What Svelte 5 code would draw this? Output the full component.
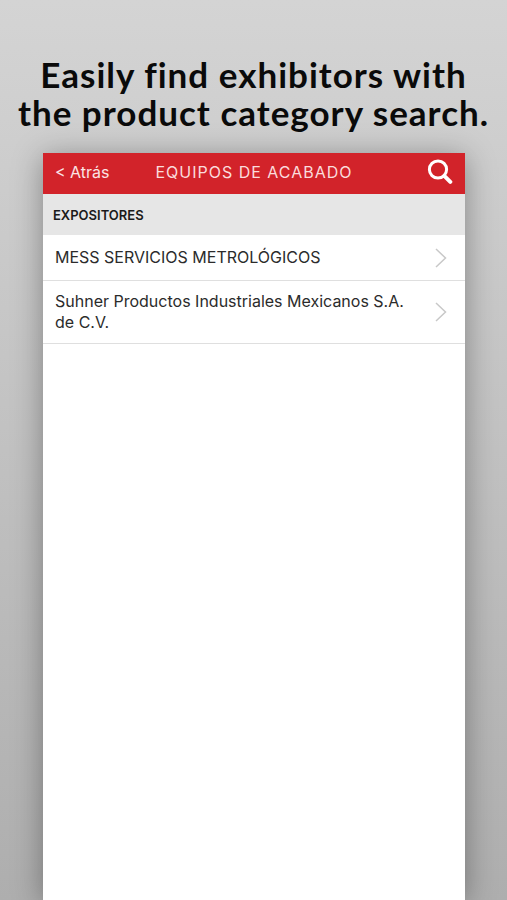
<script>
  const exhibitors = [
    { id: 1, name: "MESS SERVICIOS METROLÓGICOS" },
    { id: 2, name: "Suhner Productos Industriales Mexicanos S.A. de C.V." },
  ];
</script>

<div class="page">
  <h1>Easily find exhibitors with<br />the product category search.</h1>

  <main class="screen">
    <header>
      <button class="back" type="button">&lt; Atrás</button>
      <h2>EQUIPOS DE ACABADO</h2>
      <button class="search" type="button" aria-label="Buscar">
        <svg viewBox="0 0 26 26" width="26" height="26" aria-hidden="true">
          <circle cx="11" cy="10.5" r="8.6" />
          <path d="M17.3 16.8 L23.3 22.8" />
        </svg>
      </button>
    </header>

    <h3>EXPOSITORES</h3>

    <ul>
      {#each exhibitors as exhibitor (exhibitor.id)}
        <li>
          <a href="#exhibitor-{exhibitor.id}">
            <span>{exhibitor.name}</span>
            <svg viewBox="0 0 12 20" width="12" height="20" aria-hidden="true">
              <path d="M1 1 L10.5 10 L1 19" />
            </svg>
          </a>
        </li>
      {/each}
    </ul>
  </main>
</div>

<style>
  :global(body) {
    margin: 0;
  }

  .page {
    display: flex;
    flex-direction: column;
    min-height: 100vh;
    overflow: hidden;
    background: linear-gradient(#d4d4d4, #aeaeae);
    font-family: Inter, "Liberation Sans", sans-serif;
  }

  h1 {
    margin: 0;
    padding: 55px 0 22px;
    font-family: Lato, "Noto Sans", sans-serif;
    font-size: 35px;
    font-weight: 700;
    line-height: 38px;
    letter-spacing: 1px;
    text-align: center;
    white-space: nowrap;
    color: #0a0a0a;
  }

  .screen {
    flex: 1;
    margin: 0 42px 0 43px;
    background: #fff;
    box-shadow: 0 4px 28px rgba(0, 0, 0, 0.35);
  }

  header {
    display: grid;
    grid-template-columns: 1fr auto 1fr;
    align-items: center;
    box-sizing: border-box;
    height: 41px;
    padding: 0 12px 4px;
    background: #d2232a;
    color: #fff;
  }

  button {
    padding: 0;
    border: none;
    background: none;
    color: inherit;
    font-family: inherit;
    cursor: pointer;
  }

  .back {
    justify-self: start;
    font-size: 16px;
    line-height: 20px;
    color: #fbe4e4;
  }

  h2 {
    margin: 0;
    font-size: 16px;
    font-weight: 400;
    line-height: 20px;
    letter-spacing: 1px;
    color: #fbdcdc;
  }

  .search {
    display: flex;
    justify-self: end;
  }

  .search svg {
    fill: none;
    stroke: #fff;
    stroke-width: 3;
    stroke-linecap: round;
  }

  .search path {
    stroke-width: 4;
  }

  h3 {
    margin: 0;
    padding: 11px 10px 9px;
    background: #e6e6e6;
    font-size: 13px;
    font-weight: 600;
    line-height: 21px;
    color: #1a1a1a;
  }

  ul {
    margin: 0;
    padding: 0;
    list-style: none;
  }

  li {
    border-bottom: 1px solid #dfdfdf;
  }

  a {
    display: flex;
    align-items: center;
    justify-content: space-between;
    gap: 16px;
    box-sizing: border-box;
    min-height: 45px;
    padding: 10px 18px 10px 12px;
    font-size: 16px;
    line-height: 21px;
    color: #2b2b2b;
    text-decoration: none;
  }

  a svg {
    flex-shrink: 0;
    fill: none;
    stroke: #c8c8c8;
    stroke-width: 1.5;
  }
</style>
